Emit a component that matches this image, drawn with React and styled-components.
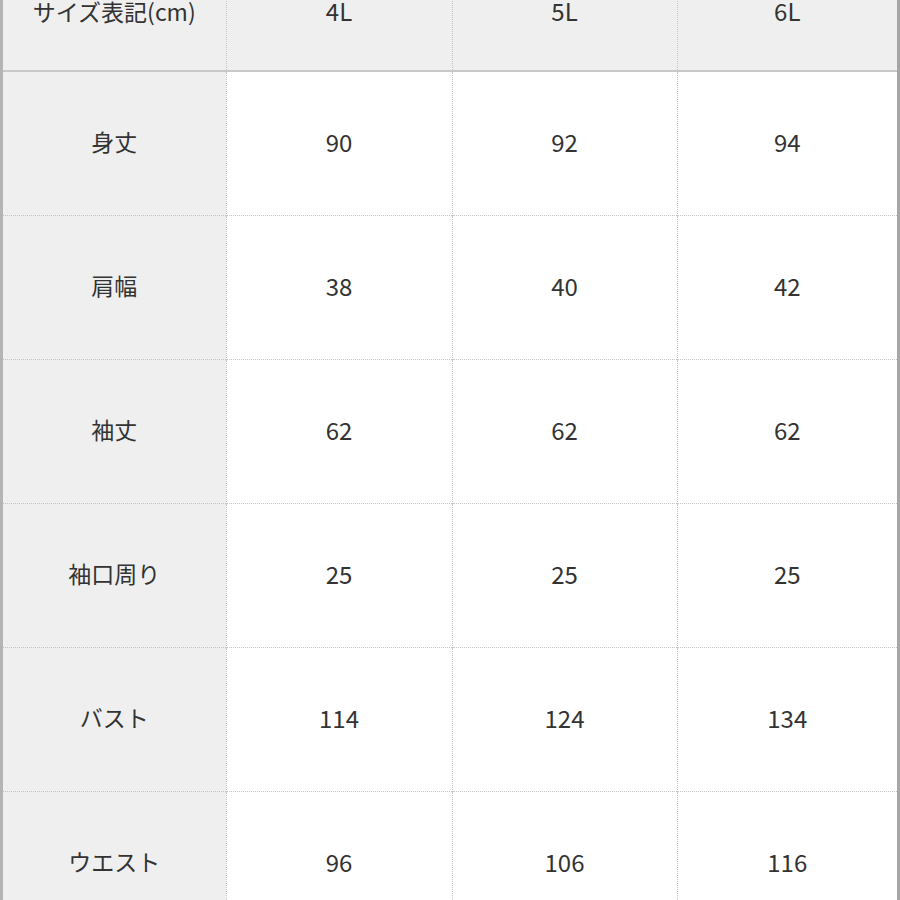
import React from "react";
import styled, { createGlobalStyle } from "styled-components";

const Global = createGlobalStyle`
  html, body { margin: 0; padding: 0; background: #ffffff; overflow: hidden; }
  body { font-family: "Noto Sans CJK JP", "Noto Sans", sans-serif; }
`;

const Frame = styled.div`
  width: 900px;
  height: 900px;
  overflow: hidden;
  box-sizing: border-box;
  border-left: 3px solid #b4b4b4;
  border-right: 3px solid #a6a6a6;
`;

const Table = styled.table`
  width: 894px;
  margin-top: -45px;
  border-collapse: collapse;
  table-layout: fixed;
  color: #333333;
`;

const HeadRow = styled.tr`
  height: 116px;
  background: #efefef;
  border-bottom: 2px solid #c8c8c8;
`;

const Row = styled.tr`
  height: 144px;
  border-bottom: 1px dotted #c4c4c4;
`;

const Col = styled.col`
  width: ${(p) => p.$w};
`;

const Cell = styled.td`
  padding: 0 0 3px 0;
  text-align: center;
  vertical-align: middle;
  font-size: ${(p) => (p.$label ? "23px" : "24px")};
  line-height: 1;
  background: ${(p) => (p.$label ? "#efefef" : "transparent")};
  border-left: ${(p) => (p.$first ? "none" : "1px dotted #c4c4c4")};
`;

const header = ["サイズ表記(cm)", "4L", "5L", "6L"];
const rows = [
  ["身丈", "90", "92", "94"],
  ["肩幅", "38", "40", "42"],
  ["袖丈", "62", "62", "62"],
  ["袖口周り", "25", "25", "25"],
  ["バスト", "114", "124", "134"],
  ["ウエスト", "96", "106", "116"],
];

export default function App() {
  return (
    <>
      <Global />
      <Frame>
        <Table>
          <colgroup>
            <Col $w="223px" />
            <Col $w="226px" />
            <Col $w="225px" />
            <Col $w="220px" />
          </colgroup>
          <tbody>
            <HeadRow>
              {header.map((h, i) => (
                <Cell key={i} $first={i === 0} $label={i === 0}>
                  {h}
                </Cell>
              ))}
            </HeadRow>
            {rows.map((r, ri) => (
              <Row key={ri}>
                {r.map((c, ci) => (
                  <Cell key={ci} $first={ci === 0} $label={ci === 0}>
                    {c}
                  </Cell>
                ))}
              </Row>
            ))}
          </tbody>
        </Table>
      </Frame>
    </>
  );
}
